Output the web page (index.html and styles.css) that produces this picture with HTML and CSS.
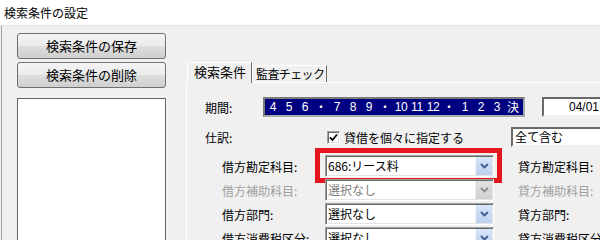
FILE: index.html
```html
<!DOCTYPE html>
<html lang="ja">
<head>
<meta charset="utf-8">
<title>検索条件の設定</title>
<link rel="stylesheet" href="styles.css">
</head>
<body>
<div class="window">
  <div class="titlebar">検索条件の設定</div>
  <div class="client">
    <div class="sidebar">
      <button class="btn">検索条件の保存</button>
      <button class="btn">検索条件の削除</button>
      <div class="listbox"></div>
    </div>
    <div class="tabctl">
      <div class="tabs">
        <div class="tab tab-active">検索条件</div>
        <div class="tab tab-audit">監査チェック</div>
      </div>
      <div class="panel">
        <div class="row row-period">
          <span class="lbl lbl-period">期間:</span>
          <div class="months">
            <span class="m">4</span><span class="m">5</span><span class="m">6</span><span class="m cjk">・</span>
            <span class="m">7</span><span class="m">8</span><span class="m">9</span><span class="m cjk">・</span>
            <span class="m">10</span><span class="m">11</span><span class="m">12</span><span class="m cjk">・</span>
            <span class="m">1</span><span class="m">2</span><span class="m">3</span><span class="m cjk">決</span>
          </div>
          <div class="datebox">04/01</div>
        </div>
        <div class="row row-journal">
          <span class="lbl lbl-journal">仕訳:</span>
          <div class="checkgroup">
            <span class="checkbox"><svg width="9" height="9" viewBox="0 0 9 9"><path d="M1 4.5 L3.5 7 L8 1.5" fill="none" stroke="#000" stroke-width="1.8"/></svg></span>
            <span class="checklabel">貸借を個々に指定する</span>
          </div>
          <div class="field field-all">全て含む</div>
        </div>
        <div class="pairs">
          <div class="row row-pair">
            <span class="lbl lbl-sub">借方勘定科目:</span>
            <div class="combo">
              <span class="combo-text">686:リース料</span>
              <span class="dd"><svg width="9" height="6" viewBox="0 0 9 6"><polyline points="1,1 4.5,4.5 8,1" fill="none" stroke="#3f5d8f" stroke-width="1.8"/></svg></span>
              <span class="highlight"></span>
            </div>
            <span class="lbl lbl-right">貸方勘定科目:</span>
          </div>
          <div class="row row-pair">
            <span class="lbl lbl-sub lbl-disabled">借方補助科目:</span>
            <div class="combo combo-disabled">
              <span class="combo-text">選択なし</span>
              <span class="dd"><svg width="9" height="6" viewBox="0 0 9 6"><polyline points="1,1 4.5,4.5 8,1" fill="none" stroke="#8a8a8a" stroke-width="1.8"/></svg></span>
            </div>
            <span class="lbl lbl-right lbl-disabled">貸方補助科目:</span>
          </div>
          <div class="row row-pair">
            <span class="lbl lbl-sub">借方部門:</span>
            <div class="combo">
              <span class="combo-text">選択なし</span>
              <span class="dd"><svg width="9" height="6" viewBox="0 0 9 6"><polyline points="1,1 4.5,4.5 8,1" fill="none" stroke="#3f5d8f" stroke-width="1.8"/></svg></span>
            </div>
            <span class="lbl lbl-right">貸方部門:</span>
          </div>
          <div class="row row-pair">
            <span class="lbl lbl-sub">借方消費税区分:</span>
            <div class="combo">
              <span class="combo-text">選択なし</span>
              <span class="dd"><svg width="9" height="6" viewBox="0 0 9 6"><polyline points="1,1 4.5,4.5 8,1" fill="none" stroke="#3f5d8f" stroke-width="1.8"/></svg></span>
            </div>
            <span class="lbl lbl-right">貸方消費税区分:</span>
          </div>
        </div>
      </div>
    </div>
  </div>
</div>
</body>
</html>
```
FILE: styles.css
```css
* { box-sizing: border-box; }
html, body { margin: 0; padding: 0; overflow: hidden; background: #f0f0f0; }
body {
  font-family: "Noto Sans CJK JP", "Noto Sans", sans-serif;
  font-size: 12px;
  color: #000;
}
.window {
  width: 600px;
  height: 240px;
  overflow: hidden;
  display: flex;
  flex-direction: column;
  background: #f0f0f0;
}
.titlebar {
  flex: none;
  height: 26px;
  background: #fff;
  border-bottom: 1px solid #e2e2e2;
  padding-left: 4px;
  line-height: 25px;
  font-size: 12px;
  white-space: nowrap;
}
.client {
  flex: 1;
  display: flex;
  margin-left: 1px;
  border-left: 1px solid #a3a3a3;
  min-height: 0;
}
.sidebar {
  flex: none;
  width: 184px;
  padding: 7px 0 0 15px;
  display: flex;
  flex-direction: column;
  gap: 3px;
}
.btn {
  width: 149px;
  height: 26px;
  padding: 0;
  border: 1px solid #707070;
  border-radius: 3px;
  background: linear-gradient(#f4f4f4 0%, #ebebeb 48%, #dddddd 52%, #cfcfcf 100%);
  font-family: "Noto Sans CJK JP", "Noto Sans", sans-serif;
  font-size: 13px;
  line-height: 22px;
  color: #000;
}
.listbox {
  flex: 1;
  width: 149px;
  margin-top: 7px;
  background: #fff;
  border: 1px solid #646464;
  border-bottom: none;
}
.tabctl {
  flex: none;
  width: 500px;
  display: flex;
  flex-direction: column;
  padding-top: 36px;
}
.tabs {
  position: relative;
  z-index: 1;
  display: flex;
  align-items: flex-end;
  height: 20px;
  padding-left: 1px;
}
.tab {
  height: 17px;
  background: #f0f0f0;
  border-top: 1px solid #fff;
  border-left: 1px solid #fff;
  border-right: 1px solid #696969;
  line-height: 16px;
  white-space: nowrap;
}
.tab-active {
  height: 21px;
  margin-bottom: -1px;
  padding: 0 5px 0 6px;
  font-size: 13px;
  line-height: 18px;
}
.tab-audit {
  width: 75px;
  padding: 0 0 0 3px;
  font-size: 12px;
  letter-spacing: -0.6px;
}
.panel {
  flex: 1;
  border-top: 1px solid #fff;
  border-left: 1px solid #fff;
  padding: 14px 0 0 18px;
}
.row {
  display: flex;
  align-items: center;
  white-space: nowrap;
}
.lbl { flex: none; white-space: nowrap; }
.row-period { height: 20px; }
.lbl-period { width: 58px; }
.months {
  flex: none;
  width: 262px;
  height: 20px;
  display: flex;
  background: #000080;
  border: 2px solid;
  border-color: #7a7a7a #a9a9a9 #a9a9a9 #7a7a7a;
  color: #fff;
}
.m {
  flex: none;
  width: 16px;
  text-align: center;
  font-family: "Liberation Sans", "Noto Sans CJK JP", sans-serif;
  font-size: 12px;
  line-height: 16px;
  letter-spacing: -0.3px;
}
.m.cjk { font-family: "Noto Sans CJK JP", sans-serif; letter-spacing: 0; }
.datebox {
  flex: none;
  width: 110px;
  height: 20px;
  margin-left: 17px;
  padding-left: 25px;
  background: #fff;
  border: 2px solid;
  border-color: #696969 #f0f0f0 #f0f0f0 #696969;
  font-family: "Liberation Sans", sans-serif;
  font-size: 12px;
  line-height: 16px;
}
.row-journal { height: 20px; margin-top: 10px; }
.lbl-journal { width: 122px; }
.checkgroup {
  flex: none;
  width: 184px;
  display: flex;
  align-items: center;
}
.checkbox {
  flex: none;
  width: 13px;
  height: 13px;
  display: flex;
  align-items: center;
  justify-content: center;
  background: #fff;
  border: 1px solid;
  border-color: #a0a0a0 #fff #fff #a0a0a0;
  box-shadow: inset 1px 1px #696969, inset -1px -1px #e3e3e3;
}
.checklabel { margin-left: 4px; }
.field-all {
  flex: none;
  width: 120px;
  height: 20px;
  padding-left: 2px;
  background: #fff;
  border: 2px solid;
  border-color: #696969 #f0f0f0 #f0f0f0 #696969;
  line-height: 16px;
}
.pairs {
  display: flex;
  flex-direction: column;
  gap: 2px;
  margin-top: 8px;
  padding-left: 17px;
}
.row-pair { height: 22px; }
.lbl-sub { width: 103px; }
.lbl-right { margin-left: 24px; }
.lbl-disabled { color: #a0a0a0; }
.combo {
  position: relative;
  flex: none;
  width: 169px;
  height: 22px;
  display: flex;
  align-items: center;
  background: #fff;
  border: 1px solid;
  border-color: #a0a0a0 #fff #fff #a0a0a0;
  box-shadow: inset 1px 1px #696969, inset -1px -1px #e3e3e3;
}
.combo-text {
  flex: 1;
  padding-left: 2px;
  line-height: 18px;
  overflow: hidden;
}
.combo-disabled .combo-text { color: #7d7d7d; }
.dd {
  flex: none;
  width: 17px;
  height: 18px;
  margin-right: 1px;
  display: flex;
  align-items: center;
  justify-content: center;
  background: linear-gradient(#d9e5f8, #bdd1f2);
  border-left: 1px solid #eef3fc;
}
.combo-disabled .dd {
  background: linear-gradient(#e0e0e0, #d0d0d0);
  border-left: 1px solid #ececec;
}
.highlight {
  position: absolute;
  left: -11px;
  top: -8px;
  right: -9px;
  bottom: -7px;
  border: 5px solid #e5161d;
  pointer-events: none;
}
```
